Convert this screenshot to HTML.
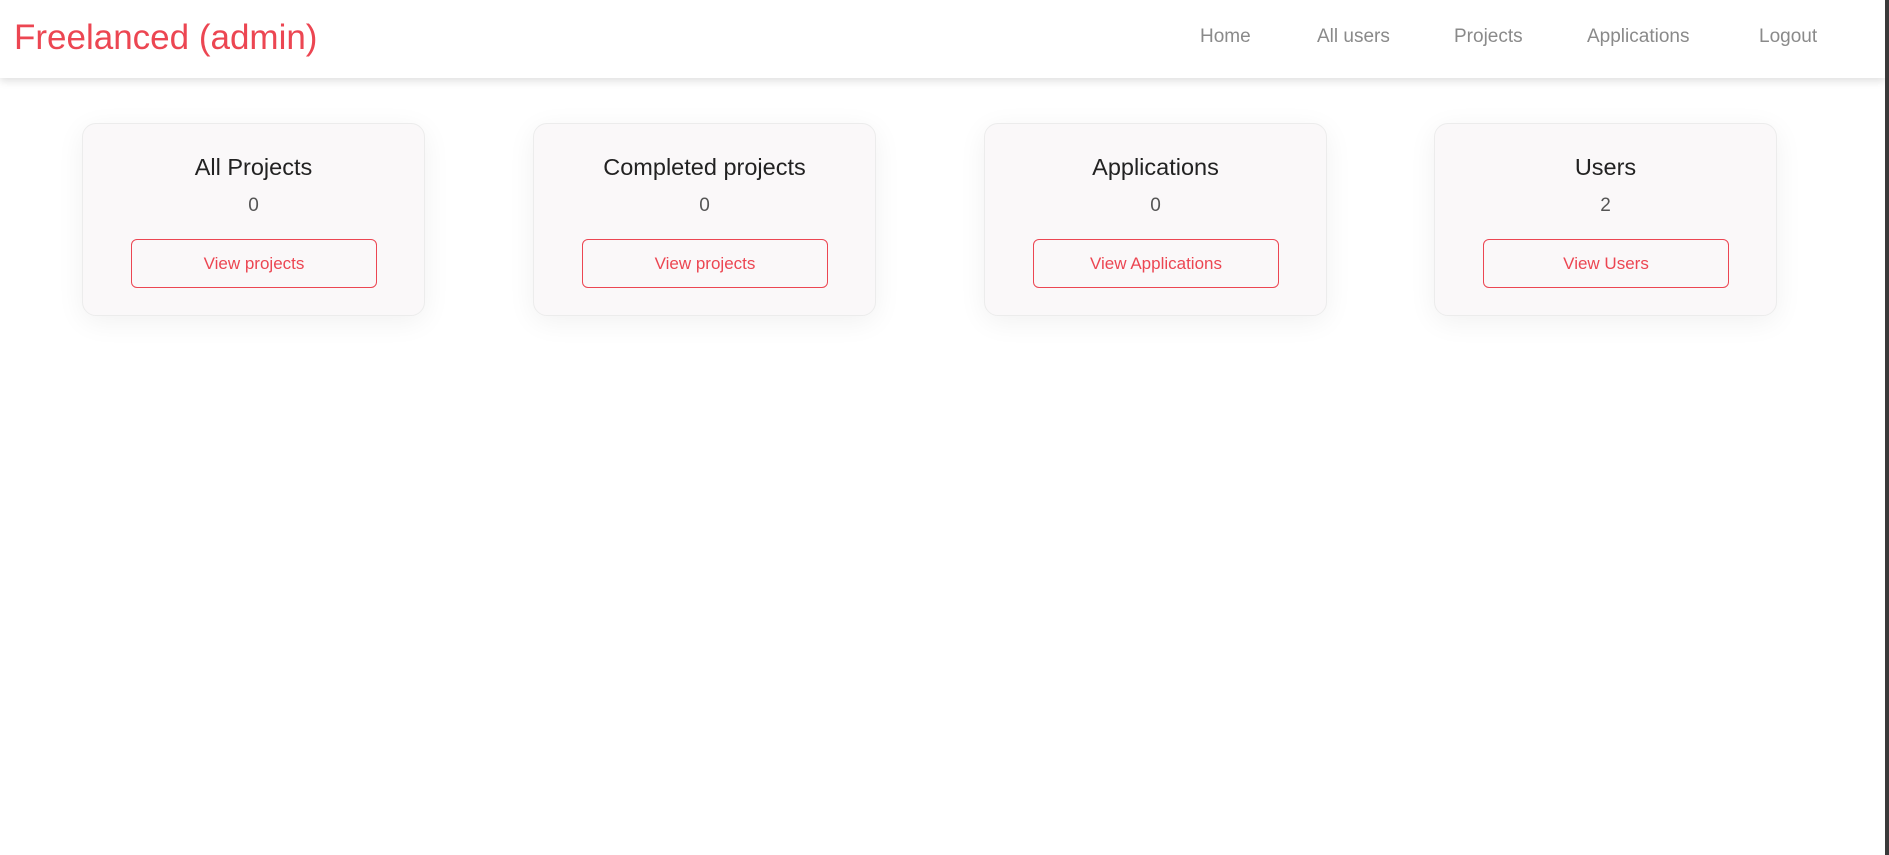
<!DOCTYPE html>
<html><head><meta charset="utf-8"><style>
*{box-sizing:border-box;margin:0;padding:0}
html,body{width:1889px;height:855px;overflow:hidden;background:#fff;font-family:"Liberation Sans",sans-serif}
.nav{position:absolute;left:0;top:0;width:1885px;height:78px;background:#fff;box-shadow:0 3px 8px rgba(0,0,0,0.13);z-index:2}
.brand{position:absolute;left:14px;top:18px;font-size:35px;color:#ec4652;white-space:nowrap}
.nav a{position:absolute;top:26px;font-size:19px;color:#8a8a8a;text-decoration:none;white-space:nowrap}
.sb{position:absolute;right:0;top:0;width:4px;height:855px;background:#3a3a3a;z-index:3}
.card{position:absolute;top:123px;width:343px;height:193px;background:#faf8f9;border:1px solid #ececec;border-radius:14px;box-shadow:0 6px 28px rgba(0,0,0,0.06);text-align:center}
.card h3{position:absolute;top:30px;left:0;right:0;font-weight:normal;font-size:23.5px;color:#222}
.card .n{position:absolute;top:71px;left:0;right:0;font-size:19px;color:#555}
.card .b{position:absolute;left:48px;top:115px;width:246px;height:49px;border:1px solid #ec4652;border-radius:6px;color:#ec4652;font-size:17px;line-height:47px}
</style></head><body>
<div class="nav">
<div class="brand">Freelanced (admin)</div>
<a style="left:1200px">Home</a>
<a style="left:1317px">All users</a>
<a style="left:1454px">Projects</a>
<a style="left:1587px">Applications</a>
<a style="left:1759px">Logout</a>
</div>
<div class="sb"></div>
<div class="card" style="left:82px"><h3>All Projects</h3><div class="n">0</div><div class="b">View projects</div></div>
<div class="card" style="left:533px"><h3>Completed projects</h3><div class="n">0</div><div class="b">View projects</div></div>
<div class="card" style="left:984px"><h3>Applications</h3><div class="n">0</div><div class="b">View Applications</div></div>
<div class="card" style="left:1434px"><h3>Users</h3><div class="n">2</div><div class="b">View Users</div></div>
</body></html>
